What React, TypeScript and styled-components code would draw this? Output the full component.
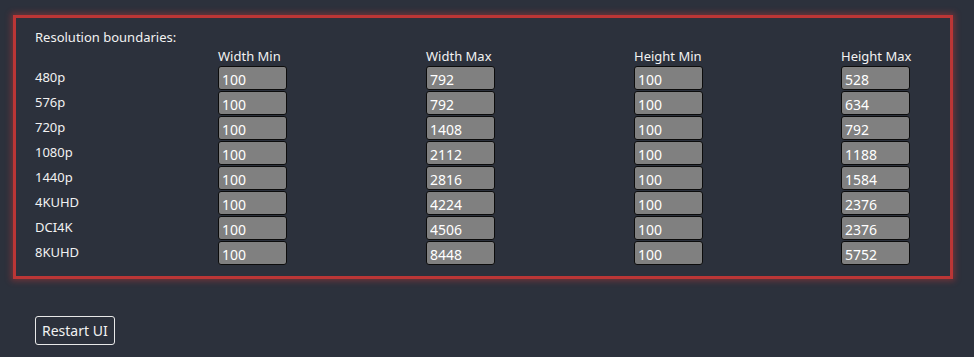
import styled, { createGlobalStyle } from "styled-components";

const rows = [
  { name: "480p", values: [100, 792, 100, 528] },
  { name: "576p", values: [100, 792, 100, 634] },
  { name: "720p", values: [100, 1408, 100, 792] },
  { name: "1080p", values: [100, 2112, 100, 1188] },
  { name: "1440p", values: [100, 2816, 100, 1584] },
  { name: "4KUHD", values: [100, 4224, 100, 2376] },
  { name: "DCI4K", values: [100, 4506, 100, 2376] },
  { name: "8KUHD", values: [100, 8448, 100, 5752] },
];

const headers = ["Width Min", "Width Max", "Height Min", "Height Max"];

function App() {
  return (
    <>
      <GlobalStyle />
      <Page>
        <Panel>
          <Title>Resolution boundaries:</Title>
          <Grid>
            <span />
            {headers.map((h) => (
              <HeaderCell key={h}>{h}</HeaderCell>
            ))}
            {rows.map((row) => (
              <Row key={row.name}>
                <RowLabel>{row.name}</RowLabel>
                {row.values.map((v, i) => (
                  <ValueInput key={i} defaultValue={v} />
                ))}
              </Row>
            ))}
          </Grid>
        </Panel>
        <RestartButton>Restart UI</RestartButton>
      </Page>
    </>
  );
}

const GlobalStyle = createGlobalStyle`
  html, body {
    margin: 0;
    background: #2c313c;
    color: #f2f2f2;
    font-family: "Noto Sans", "Open Sans", sans-serif;
    font-size: 13px;
  }
`;

const Page = styled.div`
  padding: 15px 21px 0 13px;
  display: flex;
  flex-direction: column;
  align-items: flex-start;
`;

const Panel = styled.section`
  align-self: stretch;
  border: 3px solid #bb3636;
  box-shadow: 0 0 6px 2px rgba(190, 55, 55, 0.45);
  padding: 11px 20px 10px 19px;
`;

const Title = styled.div`
  line-height: 16px;
  margin-bottom: 2px;
`;

const Grid = styled.div`
  display: grid;
  grid-template-columns: 183px 208px 208px 207px auto;
  align-items: center;
`;

const Row = styled.div`
  display: contents;
`;

const HeaderCell = styled.div`
  line-height: 19px;
`;

const RowLabel = styled.div`
  align-self: start;
  padding-top: 3px;
  line-height: 16px;
`;

const ValueInput = styled.input`
  box-sizing: border-box;
  width: 69px;
  height: 24px;
  margin-bottom: 1px;
  background: #808080;
  border: 1.5px solid #0c0c0c;
  border-radius: 3px;
  color: #ffffff;
  font-family: inherit;
  font-size: 14px;
  padding: 2px 3px 0;
  outline: none;
`;

const RestartButton = styled.button`
  margin: 37px 0 0 22px;
  height: 29px;
  padding: 0 6px;
  background: transparent;
  color: #f2f2f2;
  border: 1px solid #e8e8e8;
  border-radius: 3px;
  font-family: inherit;
  font-size: 14px;
  cursor: pointer;
`;

export default App;
